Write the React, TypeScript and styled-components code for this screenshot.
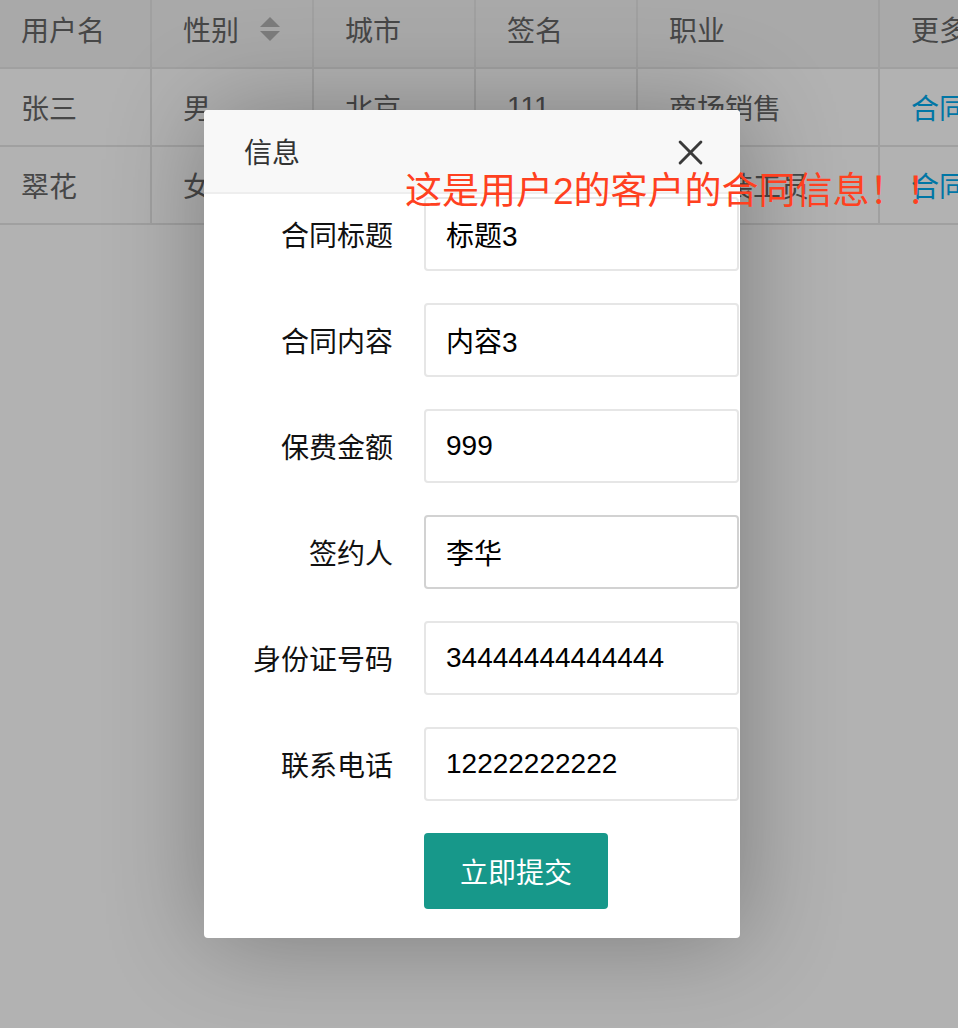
import React, { ReactElement } from 'react';
import styled, { createGlobalStyle } from 'styled-components';

const GlobalStyle = createGlobalStyle`
  html, body {
    margin: 0;
    padding: 0;
    background: #fff;
  }
  body {
    font-family: "Liberation Sans", "Noto Sans CJK SC", sans-serif;
  }
  * {
    box-sizing: border-box;
  }
`;

const StyledPage = styled.div`
  position: relative;
  width: 958px;
  height: 1028px;
  overflow: hidden;
  background: #fff;
`;

const StyledTable = styled.div`
  display: grid;
  grid-template-columns: 162px 162px 162px 162px 242px 1fr;
  margin-left: -12px;
  font-size: 28px;
  color: #666;
`;

const StyledCell = styled.div<{ $head?: boolean }>`
  display: flex;
  align-items: center;
  height: ${(p) => (p.$head ? '69px' : '78px')};
  padding: ${(p) => (p.$head ? '0 0 9px 31px' : '0 0 0 31px')};
  border-left: 2px solid #e6e6e6;
  border-bottom: 2px solid #e6e6e6;
  background: ${(p) => (p.$head ? '#f2f2f2' : '#fff')};
  white-space: nowrap;
  overflow: hidden;
`;

const StyledLink = styled.span`
  color: #01aaed;
`;

const StyledSort = styled.span`
  display: inline-flex;
  flex-direction: column;
  gap: 4px;
  margin-left: 21px;

  &::before,
  &::after {
    content: '';
    width: 0;
    height: 0;
    border-left: 10px solid transparent;
    border-right: 10px solid transparent;
  }
  &::before {
    border-bottom: 10px solid #b2b2b2;
  }
  &::after {
    border-top: 10px solid #b2b2b2;
  }
`;

const StyledShade = styled.div`
  position: absolute;
  inset: 0;
  background: rgba(0, 0, 0, 0.3);
`;

const StyledModal = styled.div`
  position: absolute;
  left: 204px;
  top: 110px;
  width: 536px;
  background: #fff;
  border-radius: 4px;
  box-shadow: 2px 2px 100px rgba(0, 0, 0, 0.3);
  overflow: hidden;
`;

const StyledModalHead = styled.div`
  display: flex;
  align-items: center;
  justify-content: space-between;
  height: 84px;
  padding: 0 37px 0 40px;
  background: #f8f8f8;
  border-bottom: 2px solid #eee;
  font-size: 28px;
  color: #333;
`;

const StyledClose = styled.svg`
  width: 25px;
  height: 25px;
  margin-top: 2px;
`;

const StyledForm = styled.div`
  display: flex;
  flex-direction: column;
  gap: 32px;
  padding: 3px 0 29px;
`;

const StyledRow = styled.div`
  display: flex;
  align-items: center;
`;

const StyledLabel = styled.label`
  width: 220px;
  padding-right: 31px;
  text-align: right;
  font-size: 28px;
  color: #111;
`;

const StyledInput = styled.div<{ $hover?: boolean }>`
  display: flex;
  align-items: center;
  width: 315px;
  height: 74px;
  padding-left: 20px;
  border: 2px solid ${(p) => (p.$hover ? '#d2d2d2' : '#e6e6e6')};
  border-radius: 4px;
  font-size: 28px;
  color: #000;
`;

const StyledButton = styled.button`
  margin-left: 220px;
  height: 76px;
  padding: 0 36px;
  border: none;
  border-radius: 4px;
  background: #17988a;
  color: #fff;
  font-family: inherit;
  font-size: 28px;
  align-self: flex-start;
`;

const StyledNotice = styled.div`
  position: absolute;
  left: 405px;
  top: 173px;
  font-size: 37px;
  line-height: 37px;
  color: #ff4020;
  white-space: nowrap;
`;

const HEAD = ['用户名', '性别', '城市', '签名', '职业', '更多'];
const ROWS = [
  ['张三', '男', '北京', '111', '商场销售', '合同信息'],
  ['翠花', '女', '上海', '222', '汽车装工员', '合同信息'],
];

const FIELDS = [
  { label: '合同标题', value: '标题3' },
  { label: '合同内容', value: '内容3' },
  { label: '保费金额', value: '999' },
  { label: '签约人', value: '李华', hover: true },
  { label: '身份证号码', value: '34444444444444' },
  { label: '联系电话', value: '12222222222' },
];

function App(): ReactElement {
  return (
    <StyledPage>
      <GlobalStyle />
      <StyledTable>
        {HEAD.map((h) => (
          <StyledCell $head key={h}>
            {h}
            {h === '性别' && <StyledSort />}
          </StyledCell>
        ))}
        {ROWS.map((row) =>
          row.map((c, i) => (
            <StyledCell key={row[0] + i}>
              {i === 5 ? <StyledLink>{c}</StyledLink> : c}
            </StyledCell>
          )),
        )}
      </StyledTable>
      <StyledShade />
      <StyledModal>
        <StyledModalHead>
          信息
          <StyledClose viewBox="0 0 24 24">
            <path d="M2 2 L22 22 M22 2 L2 22" stroke="#3a3a3a" strokeWidth="2.8" strokeLinecap="round" />
          </StyledClose>
        </StyledModalHead>
        <StyledForm>
          {FIELDS.map((f) => (
            <StyledRow key={f.label}>
              <StyledLabel>{f.label}</StyledLabel>
              <StyledInput $hover={f.hover}>{f.value}</StyledInput>
            </StyledRow>
          ))}
          <StyledButton>立即提交</StyledButton>
        </StyledForm>
      </StyledModal>
      <StyledNotice>这是用户2的客户的合同信息！！</StyledNotice>
    </StyledPage>
  );
}

export default App;
